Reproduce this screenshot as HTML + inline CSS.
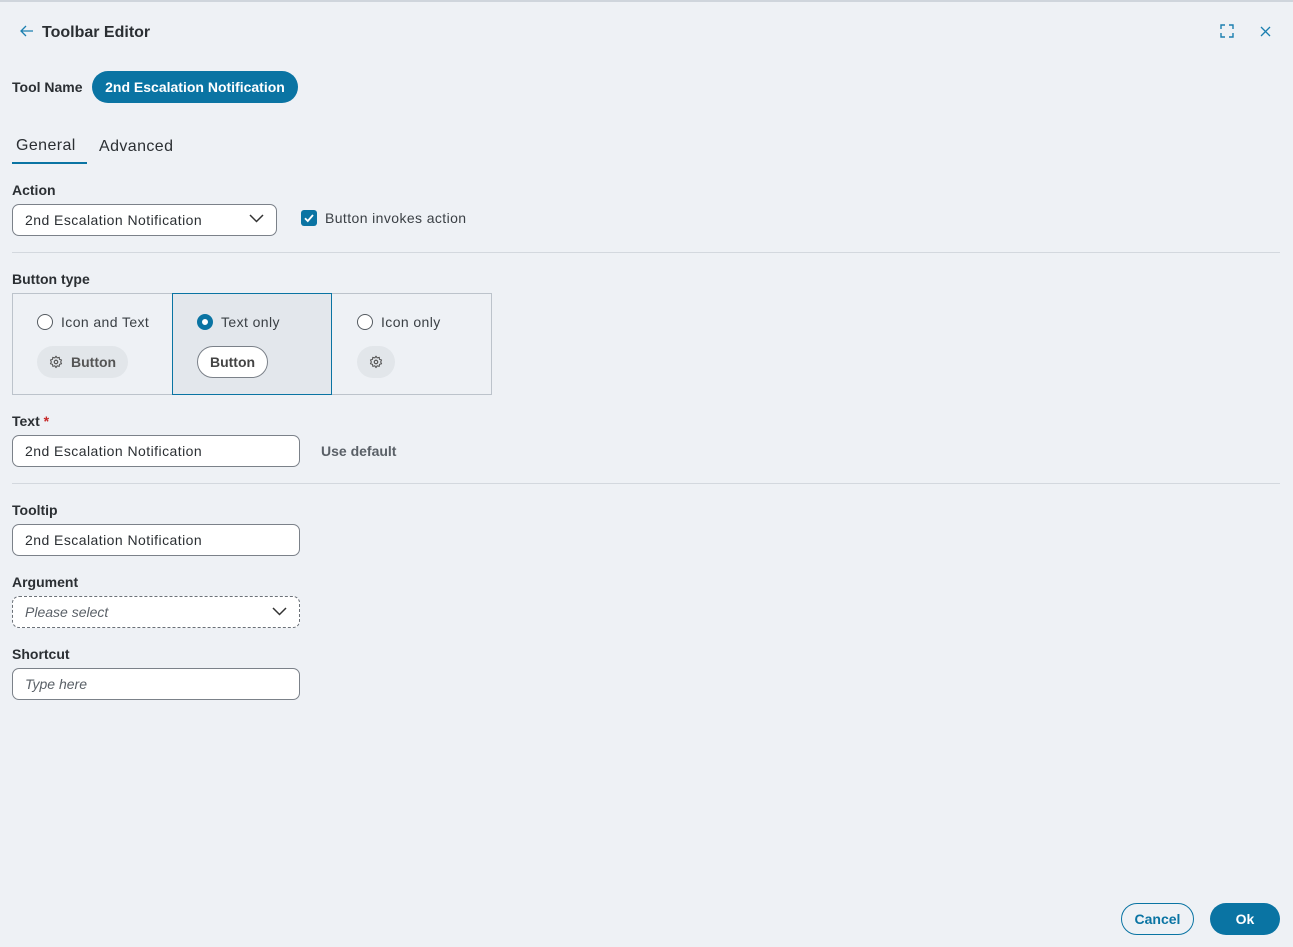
<!DOCTYPE html>
<html><head><meta charset="utf-8"><style>
*{box-sizing:border-box;margin:0;padding:0}
body{width:1293px;height:947px;background:#eef1f5;font-family:"Liberation Sans",sans-serif;color:#2b2f33;position:relative;overflow:hidden}
.a{position:absolute}
.lbl{font-size:14px;font-weight:bold;color:#2b2f33}
.inp{position:absolute;height:32px;border:1px solid #7b8189;border-radius:7px;background:#fff;font-size:14px;padding:0 12px;line-height:30px;color:#2b2f33;letter-spacing:0.45px}
.hr{position:absolute;left:12px;width:1268px;height:1px;background:#d3d8de}
.rad{position:absolute;width:16px;height:16px;border-radius:50%;border:1.5px solid #555b61;background:#fff}
.opt{font-size:14px;color:#3a3f44;letter-spacing:0.4px}
</style></head><body>
<div class="a" style="left:0;top:0;width:1293px;height:2px;background:#cfd5dc"></div>
<svg class="a" style="left:19px;top:24px" width="16" height="14" viewBox="0 0 16 14"><path d="M14 7H2M7 2L2 7l5 5" fill="none" stroke="#1b7fb0" stroke-width="1.3"/></svg>
<div class="a" style="left:42px;top:24px;font-size:16px;font-weight:bold">Toolbar Editor</div>
<svg class="a" style="left:1220px;top:24px" width="14" height="14" viewBox="0 0 14 14"><path d="M1 5V1h4M9 1h4v4M13 9v4H9M5 13H1V9" fill="none" stroke="#1b7fb0" stroke-width="1.4"/></svg>
<svg class="a" style="left:1260px;top:26px" width="11" height="11" viewBox="0 0 11 11"><path d="M1 1l9 9M10 1l-9 9" stroke="#1b7fb0" stroke-width="1.3"/></svg>
<div class="a lbl" style="left:12px;top:79px">Tool Name</div>
<div class="a" style="left:92px;top:71px;width:206px;height:32px;border-radius:16px;background:#0a74a3;color:#fff;font-size:14px;font-weight:bold;text-align:center;line-height:32px">2nd Escalation Notification</div>
<div class="a" style="left:16px;top:137px;font-size:16px;letter-spacing:0.4px">General</div>
<div class="a" style="left:12px;top:162px;width:75px;height:2px;background:#0a74a3"></div>
<div class="a" style="left:99px;top:138px;font-size:16px;letter-spacing:0.4px">Advanced</div>
<div class="a lbl" style="left:12px;top:182px">Action</div>
<div class="inp" style="left:12px;top:204px;width:265px">2nd Escalation Notification</div>
<svg class="a" style="left:249px;top:214px" width="15" height="9" viewBox="0 0 15 9"><path d="M1 1l6.5 6.5L14 1" fill="none" stroke="#333" stroke-width="1.5"/></svg>
<div class="a" style="left:301px;top:210px;width:16px;height:16px;border-radius:3px;background:#0a74a3"></div>
<svg class="a" style="left:301px;top:210px" width="16" height="16" viewBox="0 0 16 16"><path d="M4 8.2l2.8 2.8L12 5" fill="none" stroke="#fff" stroke-width="1.8"/></svg>
<div class="a opt" style="left:325px;top:210px">Button invokes action</div>
<div class="hr" style="top:252px"></div>
<div class="a lbl" style="left:12px;top:271px">Button type</div>
<div class="a" style="left:12px;top:293px;width:480px;height:102px;border:1px solid #bcc3cb"></div>
<div class="a" style="left:172px;top:293px;width:160px;height:102px;border:1px solid #0a74a3;background:#e3e7ec"></div>
<div class="rad" style="left:37px;top:314px"></div>
<div class="a opt" style="left:61px;top:314px">Icon and Text</div>
<div class="rad" style="left:197px;top:314px;border:5px solid #0a74a3"></div>
<div class="a opt" style="left:221px;top:314px">Text only</div>
<div class="rad" style="left:357px;top:314px"></div>
<div class="a opt" style="left:381px;top:314px">Icon only</div>
<div class="a" style="left:37px;top:346px;width:91px;height:32px;border-radius:16px;background:#e2e6ea"></div>
<svg class="a" style="left:49px;top:355px" width="14" height="14" viewBox="0 0 24 24"><circle cx="12" cy="12" r="3" fill="none" stroke="#555" stroke-width="2"/><path d="M12 2l2 3 3.5-1 .5 3.5 3.5 1-1.5 3.5 1.5 3-3.5 1-.5 3.5-3.5-1-2 3-2-3-3.5 1-.5-3.5-3.5-1L4 12 2.5 8.5 6 7.5 6.5 4 10 5z" fill="none" stroke="#555" stroke-width="1.8" stroke-linejoin="round"/></svg>
<div class="a" style="left:71px;top:354px;font-size:14px;font-weight:bold;color:#555">Button</div>
<div class="a" style="left:197px;top:346px;width:71px;height:32px;border-radius:16px;border:1px solid #7b8189;background:#fff;font-size:14px;font-weight:bold;color:#444;text-align:center;line-height:30px">Button</div>
<div class="a" style="left:357px;top:346px;width:38px;height:32px;border-radius:16px;background:#e2e6ea"></div>
<svg class="a" style="left:369px;top:355px" width="14" height="14" viewBox="0 0 24 24"><circle cx="12" cy="12" r="3" fill="none" stroke="#555" stroke-width="2"/><path d="M12 2l2 3 3.5-1 .5 3.5 3.5 1-1.5 3.5 1.5 3-3.5 1-.5 3.5-3.5-1-2 3-2-3-3.5 1-.5-3.5-3.5-1L4 12 2.5 8.5 6 7.5 6.5 4 10 5z" fill="none" stroke="#555" stroke-width="1.8" stroke-linejoin="round"/></svg>
<div class="a lbl" style="left:12px;top:413px">Text <span style="color:#c62828">*</span></div>
<div class="inp" style="left:12px;top:435px;width:288px">2nd Escalation Notification</div>
<div class="a" style="left:321px;top:443px;font-size:14px;font-weight:bold;color:#5a6067">Use default</div>
<div class="hr" style="top:483px"></div>
<div class="a lbl" style="left:12px;top:502px">Tooltip</div>
<div class="inp" style="left:12px;top:524px;width:288px">2nd Escalation Notification</div>
<div class="a lbl" style="left:12px;top:574px">Argument</div>
<div class="inp" style="left:12px;top:596px;width:288px;border:1px dashed #6b7178;font-style:italic;color:#5a6067;letter-spacing:0">Please select</div>
<svg class="a" style="left:272px;top:607px" width="15" height="9" viewBox="0 0 15 9"><path d="M1 1l6.5 6.5L14 1" fill="none" stroke="#333" stroke-width="1.5"/></svg>
<div class="a lbl" style="left:12px;top:646px">Shortcut</div>
<div class="inp" style="left:12px;top:668px;width:288px;font-style:italic;color:#5a6067;letter-spacing:0">Type here</div>
<div class="a" style="left:1121px;top:903px;width:73px;height:32px;border-radius:16px;border:1px solid #0a74a3;color:#0a74a3;font-size:14px;font-weight:bold;text-align:center;line-height:30px">Cancel</div>
<div class="a" style="left:1210px;top:903px;width:70px;height:32px;border-radius:16px;background:#0a74a3;color:#fff;font-size:14px;font-weight:bold;text-align:center;line-height:32px">Ok</div>
</body></html>
